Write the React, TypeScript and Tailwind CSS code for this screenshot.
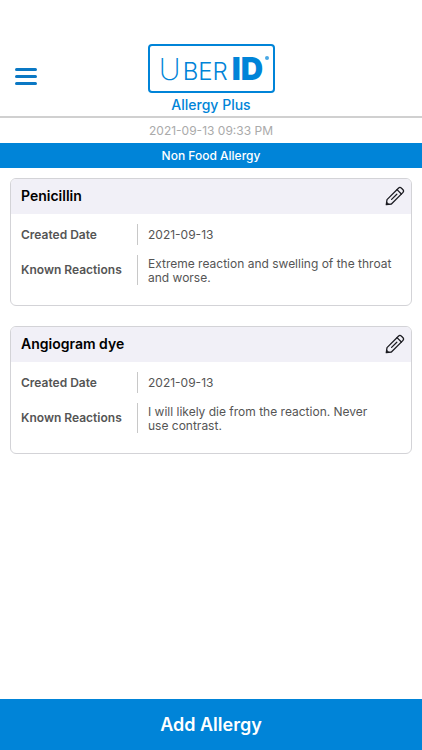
type Allergy = {
  id: string;
  name: string;
  created: string;
  reactions: string;
};

const allergies: Allergy[] = [
  {
    id: "penicillin",
    name: "Penicillin",
    created: "2021-09-13",
    reactions: "Extreme reaction and swelling of the throat\nand worse.",
  },
  {
    id: "angiogram-dye",
    name: "Angiogram dye",
    created: "2021-09-13",
    reactions: "I will likely die from the reaction. Never\nuse contrast.",
  },
];

function PencilIcon() {
  return (
    <svg
      width="20"
      height="20"
      viewBox="0 0 20 20"
      fill="none"
      stroke="#1c1c22"
      strokeWidth="1.3"
      strokeLinecap="round"
      strokeLinejoin="round"
      aria-hidden
    >
      <path d="M1.3 18.7 2 13.6 13.4 2.2a2.2 2.2 0 0 1 3.1 0l1.3 1.3a2.2 2.2 0 0 1 0 3.1L6.4 18z" />
      <path d="m12 3.6 4.4 4.4" />
      <path d="m6.6 13.4 5.2-5.2" />
      <path d="M1.6 16.4 3.6 18.4" />
    </svg>
  );
}

function Logo() {
  return (
    <div className="relative flex h-[49px] w-[127px] items-center justify-center rounded-sm border-2 border-[#0084d8] pt-1 text-[#0084d8]">
      <div className="flex items-baseline gap-0.5 whitespace-nowrap">
        <span className="text-[30px] leading-9 font-extralight">U</span>
        <span className="text-2xl leading-9 font-light">BER</span>
        <span className="pl-0.5 text-[31px] leading-9 font-black">ID</span>
      </div>
      <span className="absolute top-2.5 right-1 size-1 rounded-full bg-[#4aa8e4]" />
    </div>
  );
}

function AllergyCard({ allergy }: { allergy: Allergy }) {
  return (
    <article className="overflow-hidden rounded-md border border-[#d3d3d7] bg-white">
      <div className="flex h-[35px] items-center justify-between bg-[#f1f0f7] pr-1.5 pb-0.5 pl-2.5">
        <h2 className="text-sm font-semibold text-black">{allergy.name}</h2>
        <button type="button" aria-label={`Edit ${allergy.name}`}>
          <PencilIcon />
        </button>
      </div>
      <dl className="flex flex-col gap-2.5 pt-2.5 pb-5 pl-2.5 text-xs text-[#555]">
        <div className="flex">
          <dt className="flex w-[117px] shrink-0 items-center border-r border-[#c8c8c8] font-semibold">
            Created Date
          </dt>
          <dd className="py-1 pl-2.5 leading-[13px]">{allergy.created}</dd>
        </div>
        <div className="flex">
          <dt className="flex w-[117px] shrink-0 items-center border-r border-[#c8c8c8] font-semibold">
            Known Reactions
          </dt>
          <dd className="pt-0.5 pr-1 pl-2.5 leading-[14px] whitespace-pre-line">{allergy.reactions}</dd>
        </div>
      </dl>
    </article>
  );
}

export default function App() {
  return (
    <div className="flex min-h-screen flex-col bg-white font-['Inter','Liberation_Sans',sans-serif]">
      <header className="grid grid-cols-[1fr_auto_1fr] items-start border-b-2 border-[#d0d0d0] pt-11">
        <button type="button" aria-label="Menu" className="mt-6 ml-[15px] flex w-[22px] flex-col gap-1">
          <span className="h-[3px] w-full rounded-full bg-[#0a78c4]" />
          <span className="h-[3px] w-full rounded-full bg-[#0a78c4]" />
          <span className="h-[3px] w-full rounded-full bg-[#0a78c4]" />
        </button>
        <div className="flex flex-col items-center">
          <Logo />
          <h1 className="text-sm leading-[23px] font-medium text-[#0084d8]">Allergy Plus</h1>
        </div>
      </header>

      <time dateTime="2021-09-13T21:33" className="block text-center text-xs leading-[25px] text-[#aaa]">
        2021-09-13 09:33 PM
      </time>
      <p className="bg-[#0084d8] text-center text-xs leading-[25px] font-medium text-white">
        Non Food Allergy
      </p>

      <main className="flex flex-1 flex-col gap-5 px-2.5 py-2.5">
        {allergies.map((allergy) => (
          <AllergyCard key={allergy.id} allergy={allergy} />
        ))}
      </main>

      <button type="button" className="h-[51px] w-full bg-[#0084d8] text-lg font-semibold text-white">
        Add Allergy
      </button>
    </div>
  );
}
